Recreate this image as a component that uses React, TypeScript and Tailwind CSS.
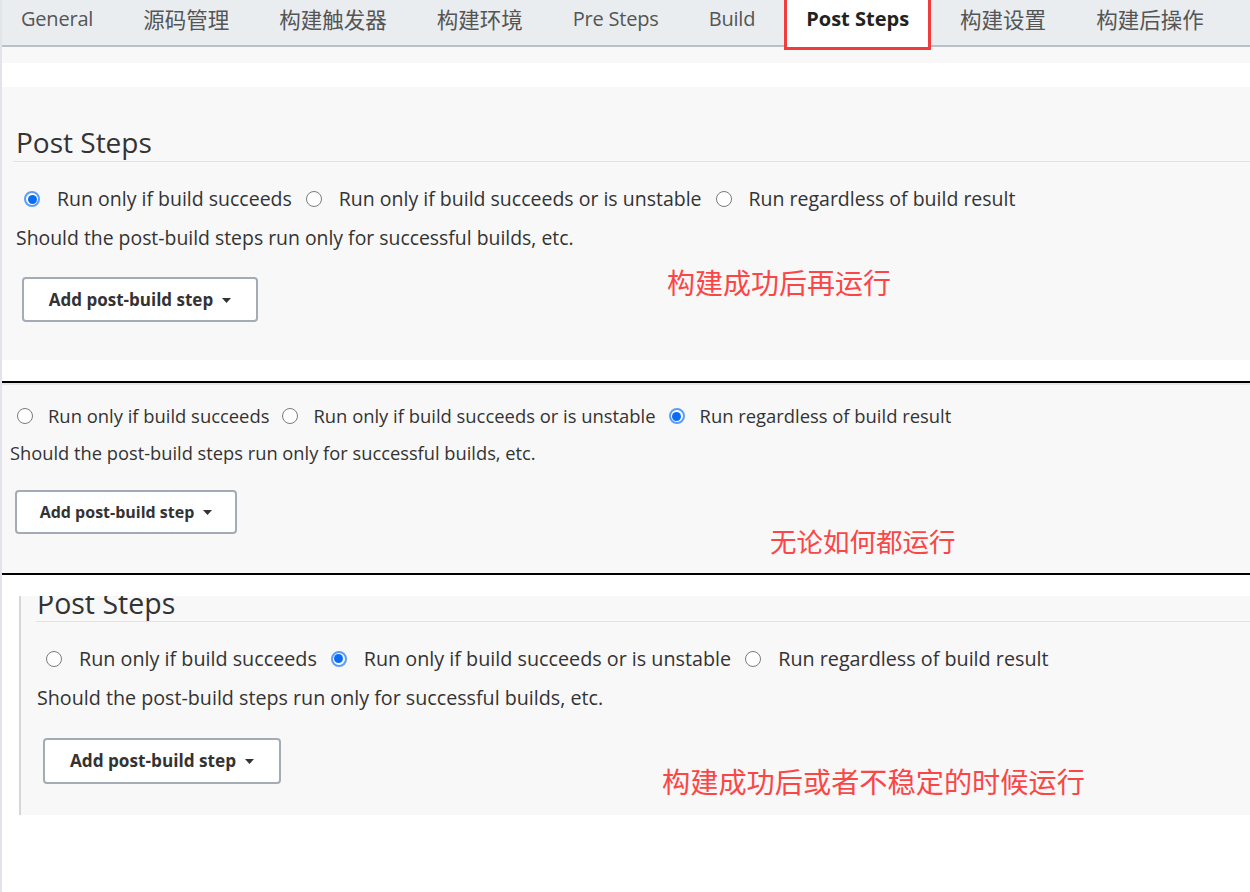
import type { ReactNode } from 'react'

const tabs = [
  { label: 'General', cjk: false },
  { label: '源码管理', cjk: true },
  { label: '构建触发器', cjk: true },
  { label: '构建环境', cjk: true },
  { label: 'Pre Steps', cjk: false },
  { label: 'Build', cjk: false },
  { label: 'Post Steps', cjk: false },
  { label: '构建设置', cjk: true },
  { label: '构建后操作', cjk: true },
]

function Caret() {
  return (
    <svg width="9" height="5" viewBox="0 0 9 5" className="ml-[9px] mt-[1px]">
      <path d="M0 0h9L4.5 5z" fill="#333" />
    </svg>
  )
}

function RadioDot({ checked }: { checked: boolean }) {
  if (checked) {
    return (
      <span className="flex h-4 w-4 shrink-0 items-center justify-center rounded-full border-2 border-[#5b9cf7] bg-white">
        <span className="h-[9px] w-[9px] rounded-full bg-[#0a6cf5]" />
      </span>
    )
  }
  return <span className="h-4 w-4 shrink-0 rounded-full border border-[#7a7a7a] bg-white" />
}

const options = ['Run only if build succeeds', 'Run only if build succeeds or is unstable', 'Run regardless of build result']

function RadioRow({ selected, className, textGap }: { selected: number; className: string; textGap: string }) {
  return (
    <div className={'flex items-center text-[#333] ' + className}>
      {options.map((o, i) => (
        <span key={o} className="flex items-center">
          <RadioDot checked={i === selected} />
          <span className={textGap}>{o}</span>
        </span>
      ))}
    </div>
  )
}

function AddButton({ className }: { className: string }) {
  return (
    <button
      type="button"
      className={'flex items-center justify-center rounded-[4px] border-2 border-[#a3acb4] bg-white font-bold text-[#333] ' + className}
    >
      Add post-build step
      <Caret />
    </button>
  )
}

function Note({ children, className }: { children: ReactNode; className: string }) {
  return (
    <span className={"absolute whitespace-nowrap font-['Noto_Sans_CJK_SC',sans-serif] text-[#fb4646] " + className}>
      {children}
    </span>
  )
}

export default function App() {
  return (
    <div className="min-h-screen border-l-2 border-[#e3e3ea] bg-white font-['Open_Sans','Noto_Sans_CJK_SC',sans-serif]">
      {/* tab bar */}
      <div className="flex h-[47px] items-start border-b-2 border-[#b9c1c8] bg-[#e9edf0] text-[20px] text-[#555]">
        {tabs.map((t) =>
          t.label === 'Post Steps' ? (
            <div
              key={t.label}
              className="relative z-10 mx-[4px] h-[50px] border-x-[3px] border-b-[3px] border-[#f03c3c] bg-white px-[19px] pt-[5px] font-bold leading-[28px] text-[#222]"
            >
              {t.label}
            </div>
          ) : (
            <div
              key={t.label}
              className={
                'px-[25px] pt-[5px] leading-[28px] tracking-[-0.2px] first:pl-[19px] ' +
                (t.cjk ? "font-['Noto_Sans_CJK_SC',sans-serif] text-[21.5px] tracking-normal" : '')
              }
            >
              {t.label}
            </div>
          ),
        )}
      </div>
      <div className="h-[16px] bg-[#f8f8f8]" />
      <div className="h-[24px]" />

      {/* first capture */}
      <div className="relative h-[273px] bg-[#f8f8f8] pl-[11px]">
        <h2 className="border-b border-[#e2e2e2] pb-[2px] pl-[3px] pt-[38px] text-[28px] leading-[34px] text-[#333]">
          Post Steps
        </h2>
        <RadioRow selected={0} className="ml-[11px] mt-[24px] gap-[14px] text-[19.5px] leading-[26px]" textGap="ml-[17px]" />
        <p className="ml-[3px] mt-[13px] text-[19.4px] leading-[26px] text-[#333]">
          Should the post-build steps run only for successful builds, etc.
        </p>
        <AddButton className="ml-[9px] mt-[26px] h-[45px] w-[236px] text-[17px]" />
        <Note className="left-[665px] top-[178px] text-[28px] leading-[34px]">构建成功后再运行</Note>
      </div>

      <div className="h-[21px]" />
      <div className="h-[2px] bg-black" />

      {/* second capture */}
      <div className="relative h-[190px] border-t-2 border-[#e6e6e6] bg-[#f8f8f8]">
        <RadioRow selected={2} className="ml-[15px] pt-[18px] gap-[13px] text-[18.4px] leading-[26px]" textGap="ml-[15px]" />
        <p className="ml-[8px] mt-[11px] text-[18.3px] leading-[26px] text-[#333]">
          Should the post-build steps run only for successful builds, etc.
        </p>
        <AddButton className="ml-[13px] mt-[24px] h-[44px] w-[222px] text-[16px]" />
        <Note className="left-[768px] top-[140px] text-[26.5px] leading-[32px]">无论如何都运行</Note>
      </div>
      <div className="h-[2px] bg-black" />

      {/* third capture */}
      <div className="h-[21px]" />
      <div className="relative ml-[17px] h-[219px] overflow-hidden border-l-2 border-[#d6d6d6] bg-[#f8f8f8] pl-[15px]">
        <h2 className="-mt-[10px] border-b border-[#e2e2e2] pb-[1px] pl-[1px] text-[28.5px] leading-[34px] text-[#333]">
          Post Steps
        </h2>
        <RadioRow selected={1} className="ml-[10px] mt-[23px] gap-[14px] text-[19.75px] leading-[27px]" textGap="ml-[17px]" />
        <p className="ml-[1px] mt-[12px] text-[19.7px] leading-[27px] text-[#333]">
          Should the post-build steps run only for successful builds, etc.
        </p>
        <AddButton className="ml-[7px] mt-[27px] h-[46px] w-[238px] text-[17.2px]" />
        <Note className="left-[641px] top-[168px] text-[28.2px] leading-[34px]">构建成功后或者不稳定的时候运行</Note>
      </div>
    </div>
  )
}
